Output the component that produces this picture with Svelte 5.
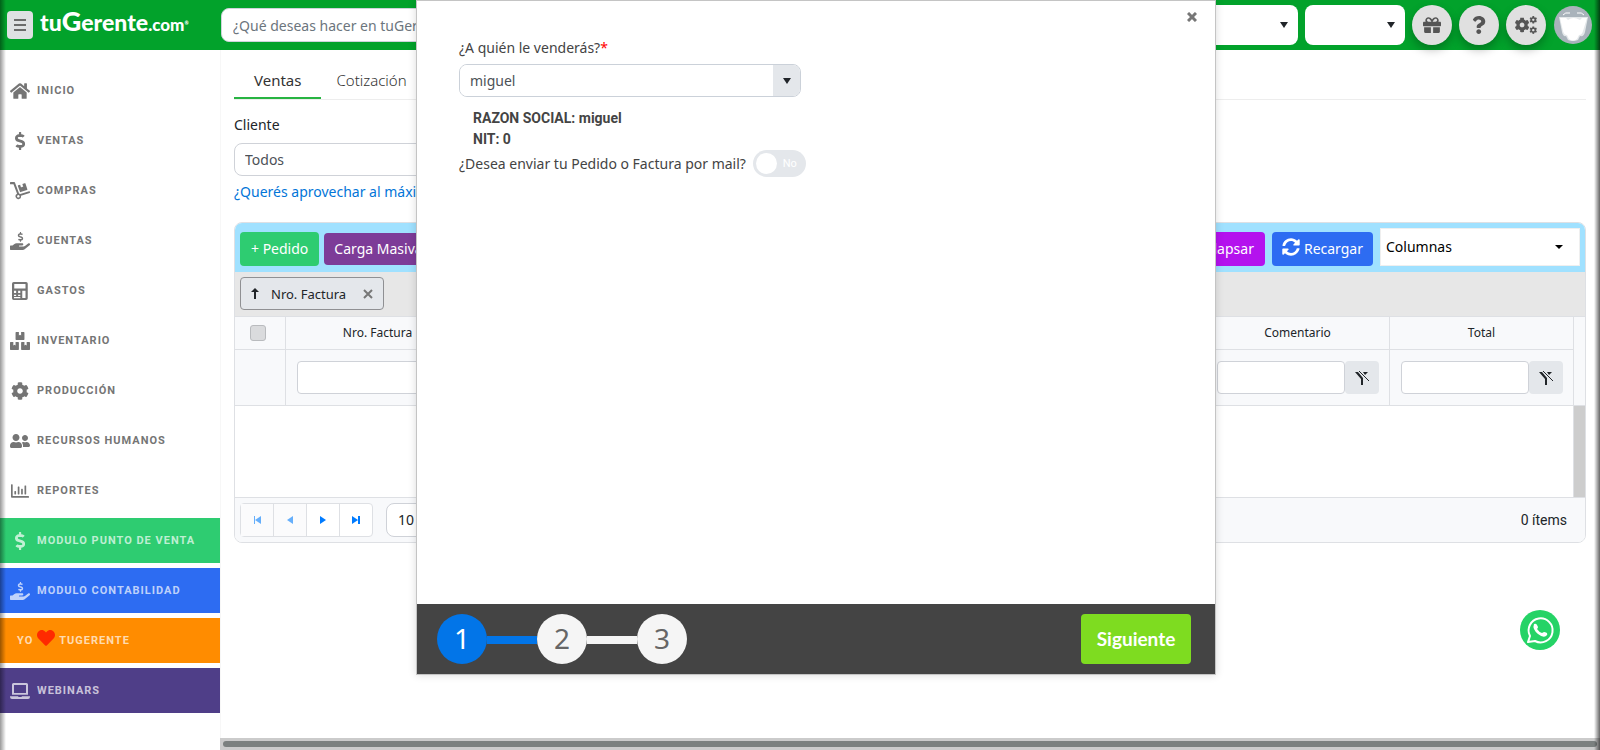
<script>
  const gear =
    'M487.4 315.7l-42.6-24.6c4.3-23.2 4.3-47 0-70.2l42.6-24.6c4.9-2.8 7.1-8.6 5.5-14-11.1-35.6-30-67.8-54.7-94.6-3.8-4.1-10-5.1-14.8-2.3L380.8 110c-17.9-15.4-38.5-27.3-60.8-35.1V25.8c0-5.6-3.9-10.5-9.4-11.7-36.7-8.2-74.3-7.8-109.2 0-5.5 1.2-9.4 6.1-9.4 11.7V75c-22.2 7.9-42.8 19.8-60.8 35.1L88.7 85.5c-4.9-2.8-11-1.9-14.8 2.3-24.7 26.7-43.6 58.9-54.7 94.6-1.7 5.4.6 11.2 5.5 14L67.3 221c-4.3 23.2-4.3 47 0 70.2l-42.6 24.6c-4.9 2.8-7.1 8.6-5.5 14 11.1 35.6 30 67.8 54.7 94.6 3.8 4.1 10 5.1 14.8 2.3l42.6-24.6c17.9 15.4 38.5 27.3 60.8 35.1v49.2c0 5.6 3.9 10.5 9.4 11.7 36.7 8.2 74.3 7.8 109.2 0 5.5-1.2 9.4-6.1 9.4-11.7v-49.2c22.2-7.9 42.8-19.8 60.8-35.1l42.6 24.6c4.9 2.8 11 1.9 14.8-2.3 24.7-26.7 43.6-58.9 54.7-94.6 1.5-5.5-.7-11.3-5.6-14.1zM256 336c-44.1 0-80-35.9-80-80s35.9-80 80-80 80 35.9 80 80-35.9 80-80 80z';
  const dollar =
    'M209.2 233.4l-108-31.6C88.7 198.2 80 186.5 80 173.5c0-16.3 13.2-29.5 29.5-29.5h66.3c12.2 0 24.2 3.7 34.2 10.5 6.1 4.1 14.3 3.1 19.5-2l34.8-34c7.1-6.9 6.1-18.4-1.8-24.5C238 74.8 207.4 64.1 176 64V16c0-8.8-7.2-16-16-16h-32c-8.8 0-16 7.2-16 16v48h-2.5C45.8 64-5.4 118.7.5 183.6c4.2 46.1 39.4 83.6 83.8 96.6l102.5 30c12.5 3.7 21.2 15.3 21.2 28.3 0 16.3-13.2 29.5-29.5 29.5h-66.3C100 368 88 364.3 78 357.5c-6.1-4.1-14.3-3.1-19.5 2l-34.8 34c-7.1 6.9-6.1 18.4 1.8 24.5 24.5 19.2 55.1 29.9 86.5 30v48c0 8.8 7.2 16 16 16h32c8.8 0 16-7.2 16-16v-48.2c46.6-.9 90.3-28.6 105.7-72.7 21.5-61.6-14.6-124.8-72.5-141.7z';
  const hand =
    'M565.3 328.1c-11.8-10.7-30.2-10-42.6 0L430.3 402c-11.3 9.1-25.4 14-40 14H272c-8.8 0-16-7.2-16-16s7.2-16 16-16h78.3c15.9 0 30.7-10.9 33.3-26.6 3.3-20-12.1-37.4-31.6-37.4H192c-27 0-53.1 9.3-74.1 26.3L71.4 384H16c-8.8 0-16 7.2-16 16v96c0 8.8 7.2 16 16 16h356.8c14.5 0 28.6-4.9 40-14L564 377c15.2-12.1 16.4-35.3 1.3-48.9z';
  const heart =
    'M462.3 62.6C407.5 15.9 326 24.3 275.7 76.2L256 96.5l-19.7-20.3C186.1 24.3 104.5 15.9 49.7 62.6c-62.8 53.6-66.1 149.8-9.9 207.9l193.5 199.8c12.5 12.9 32.8 12.9 45.3 0l193.5-199.8c56.3-58.1 53-154.3-9.8-207.9z';

  const icons = {
    home: { w: 576, parts: [{ d: 'M280.37 148.26L96 300.11V464a16 16 0 0 0 16 16l112.06-.29a16 16 0 0 0 15.92-16V368a16 16 0 0 1 16-16h64a16 16 0 0 1 16 16v95.64a16 16 0 0 0 16 16.05L464 480a16 16 0 0 0 16-16V300L295.67 148.26a12.19 12.19 0 0 0-15.3 0zM571.6 251.47L488 182.56V44.05a12 12 0 0 0-12-12h-56a12 12 0 0 0-12 12v72.61L318.47 43a48 48 0 0 0-61 0L4.34 251.47a12 12 0 0 0-1.6 16.9l25.5 31A12 12 0 0 0 45.15 301l235.22-193.74a12.19 12.19 0 0 1 15.3 0L530.9 301a12 12 0 0 0 16.9-1.6l25.5-31a12 12 0 0 0-1.7-16.93z' }] },
    dollar: { w: 288, parts: [{ d: dollar }] },
    dolly: { w: 576, parts: [
      { d: 'M0 16Q0 0 16 0H122Q139 0 145 16L262 326Q280 330 294 344L552 262Q568 258 572 273L576 290Q580 305 566 310L316 392A80 80 0 1 1 204 338L100 64H16Q0 64 0 48ZM240 372a36 36 0 1 0 .1 0z' },
      { d: 'M226 112Q222 98 236 93L292 74L318 158L346 136L382 138L356 52L424 30Q440 26 445 40L500 208Q504 222 490 227L306 288Q291 292 286 278Z' }
    ] },
    handDollar: { w: 576, parts: [{ d: hand }, { d: dollar, t: 'translate(224 0) scale(.54)' }] },
    calculator: { w: 448, parts: [{ d: 'M48 0H400Q448 0 448 48V464Q448 512 400 512H48Q0 512 0 464V48Q0 0 48 0ZM64 56V184H384V56ZM56 248V310H118V248ZM174 248V310H236V248ZM292 248V456H384V248ZM56 366V400H118V366ZM174 366V400H236V366ZM56 430V460H236V430Z' }] },
    boxes: { w: 576, parts: [{ d: 'M560 288h-80v96l-32-21.3-32 21.3v-96h-80c-8.8 0-16 7.2-16 16v192c0 8.8 7.2 16 16 16h224c8.8 0 16-7.2 16-16V304c0-8.8-7.2-16-16-16zm-384-64h224c8.8 0 16-7.2 16-16V16c0-8.8-7.2-16-16-16h-80v96l-32-21.3L256 96V0h-80c-8.8 0-16 7.2-16 16v192c0 8.8 7.2 16 16 16zm64 64h-80v96l-32-21.3L96 384v-96H16c-8.8 0-16 7.2-16 16v192c0 8.8 7.2 16 16 16h224c8.8 0 16-7.2 16-16V304c0-8.8-7.2-16-16-16z' }] },
    cog: { w: 512, parts: [{ d: gear }] },
    users: { w: 640, parts: [{ d: 'M192 256c61.9 0 112-50.1 112-112S253.9 32 192 32 80 82.1 80 144s50.1 112 112 112zm76.8 32h-8.3c-20.8 10-43.9 16-68.5 16s-47.6-6-68.5-16h-8.3C51.6 288 0 339.6 0 403.2V432c0 26.5 21.5 48 48 48h288c26.5 0 48-21.5 48-48v-28.8c0-63.6-51.6-115.2-115.2-115.2zM480 256c53 0 96-43 96-96s-43-96-96-96-96 43-96 96 43 96 96 96zm48 32h-3.8c-13.9 4.8-28.6 8-44.2 8s-30.3-3.2-44.2-8H432c-20.4 0-39.2 5.9-55.7 15.4 24.4 26.3 39.7 61.2 39.7 99.8v38.4c0 2.2-.5 4.3-.6 6.4H592c26.5 0 48-21.5 48-48 0-61.9-50.1-112-112-112z' }] },
    chart: { w: 512, parts: [{ d: 'M396.8 352h22.4c6.4 0 12.8-6.4 12.8-12.8V108.8c0-6.4-6.4-12.8-12.8-12.8h-22.4c-6.4 0-12.8 6.4-12.8 12.8v230.4c0 6.4 6.4 12.8 12.8 12.8zm-192 0h22.4c6.4 0 12.8-6.4 12.8-12.8V140.8c0-6.4-6.4-12.8-12.8-12.8h-22.4c-6.4 0-12.8 6.4-12.8 12.8v198.4c0 6.4 6.4 12.8 12.8 12.8zm96 0h22.4c6.4 0 12.8-6.4 12.8-12.8V204.8c0-6.4-6.4-12.8-12.8-12.8h-22.4c-6.4 0-12.8 6.4-12.8 12.8v134.4c0 6.4 6.4 12.8 12.8 12.8zM496 400H48V80c0-8.84-7.16-16-16-16H16C7.16 64 0 71.16 0 80v336c0 17.67 14.33 32 32 32h464c8.84 0 16-7.16 16-16v-16c0-8.84-7.16-16-16-16zm-387.2-48h22.4c6.4 0 12.8-6.4 12.8-12.8v-70.4c0-6.4-6.4-12.8-12.8-12.8h-22.4c-6.4 0-12.8 6.4-12.8 12.8v70.4c0 6.4 6.4 12.8 12.8 12.8z' }] },
    laptop: { w: 640, parts: [{ d: 'M112 0H528Q576 0 576 48V376H64V48Q64 0 112 0ZM128 64V320H512V64ZM0 424H256Q260 448 284 448H356Q380 448 384 424H640V440Q640 512 576 512H64Q0 512 0 440Z' }] },
    gift: { w: 512, parts: [{ d: 'M32 448c0 17.7 14.3 32 32 32h160V320H32v128zm256 32h160c17.7 0 32-14.3 32-32V320H288v160zm192-320h-42.1c6.2-12.1 10.1-25.5 10.1-40 0-48.5-39.5-88-88-88-41.6 0-68.5 21.3-103 68.3-34.5-47-61.4-68.3-103-68.3-48.5 0-88 39.5-88 88 0 14.5 3.8 27.9 10.1 40H32c-17.7 0-32 14.3-32 32v80c0 8.8 7.2 16 16 16h480c8.8 0 16-7.2 16-16v-80c0-17.7-14.3-32-32-32zm-326.1 0c-22.1 0-40-17.9-40-40s17.9-40 40-40c19.9 0 34.6 3.3 86.1 80h-86.1zm206.1 0h-86.1c51.4-76.5 65.7-80 86.1-80 22.1 0 40 17.9 40 40s-17.9 40-40 40z' }] },
    question: { w: 384, parts: [{ d: 'M202.021 0C122.202 0 70.503 32.703 29.914 91.026c-7.363 10.58-5.093 25.086 5.178 32.874l43.138 32.709c10.373 7.865 25.132 6.026 33.253-4.148 25.049-31.381 43.63-49.449 82.757-49.449 30.764 0 68.816 19.799 68.816 49.631 0 22.552-18.617 34.134-48.993 51.164-35.423 19.86-82.299 44.576-82.299 106.405V320c0 13.255 10.745 24 24 24h72.471c13.255 0 24-10.745 24-24v-5.773c0-42.86 125.268-44.645 125.268-160.627C377.504 66.256 286.902 0 202.021 0zM192 373.459c-38.196 0-69.271 31.075-69.271 69.271 0 38.195 31.075 69.27 69.271 69.27s69.271-31.075 69.271-69.271-31.075-69.27-69.271-69.27z' }] },
    cogs: { w: 640, parts: [
      { d: gear, t: 'translate(-14 40) scale(.84)' },
      { d: gear, t: 'translate(410 0) scale(.43)' },
      { d: gear, t: 'translate(410 292) scale(.43)' }
    ] },
    sync: { w: 512, parts: [{ d: 'M370.72 133.28C339.458 104.008 298.888 87.962 255.848 88c-77.458.068-144.328 53.178-162.791 126.85-1.344 5.363-6.122 9.15-11.651 9.15H24.103c-7.498 0-13.194-6.807-11.807-14.176C33.933 94.924 134.813 8 256 8c66.448 0 126.791 26.136 171.315 68.685L463.03 40.97C478.149 25.851 504 36.559 504 57.941V192c0 13.255-10.745 24-24 24H345.941c-21.382 0-32.09-25.851-16.971-40.971l41.75-41.749zM32 296h134.059c21.382 0 32.09 25.851 16.971 40.971l-41.75 41.75c31.262 29.273 71.835 45.319 114.876 45.28 77.418-.07 144.315-53.144 162.787-126.849 1.344-5.363 6.122-9.15 11.651-9.15h57.304c7.498 0 13.194 6.807 11.807 14.176C478.067 417.076 377.187 504 256 504c-66.448 0-126.791-26.136-171.315-68.685L48.97 471.03C33.851 486.149 8 475.441 8 454.059V320c0-13.255 10.745-24 24-24z' }] }
  };

  const menu = [
    { icon: 'home', text: 'INICIO' },
    { icon: 'dollar', text: 'VENTAS' },
    { icon: 'dolly', text: 'COMPRAS' },
    { icon: 'handDollar', text: 'CUENTAS' },
    { icon: 'calculator', text: 'GASTOS' },
    { icon: 'boxes', text: 'INVENTARIO' },
    { icon: 'cog', text: 'PRODUCCIÓN' },
    { icon: 'users', text: 'RECURSOS HUMANOS' },
    { icon: 'chart', text: 'REPORTES' },
    { icon: 'dollar', text: 'MODULO PUNTO DE VENTA', tone: 'green' },
    { icon: 'handDollar', text: 'MODULO CONTABILIDAD', tone: 'blue' },
    { heart: true, tone: 'orange' },
    { icon: 'laptop', text: 'WEBINARS', tone: 'purple' }
  ];

  const columns = ['Nro. Factura', '', '', '', '', 'Comentario', 'Total'];
  const pagerButtons = [
    { label: 'Primera página', d: 'M1 0h1v8H1zM8 0v8L2 4z', off: true },
    { label: 'Página anterior', d: 'M7 0v8L1 4z', off: true },
    { label: 'Página siguiente', d: 'M1 0v8l6-4z' },
    { label: 'Última página', d: 'M0 0v8l6-4zM6 0h2v8H6z' }
  ];
</script>

{#snippet icon(name)}
  <svg class="icon" viewBox="0 0 {icons[name].w} 512" aria-hidden="true">
    {#each icons[name].parts as part}
      <path d={part.d} transform={part.t} fill-rule="evenodd" />
    {/each}
  </svg>
{/snippet}

{#snippet caret()}
  <svg class="caret" viewBox="0 0 8 6" aria-hidden="true"><path d="M0 0h8L4 6z" /></svg>
{/snippet}

<div class="page">
  <header>
    <button class="burger" aria-label="Menú">
      <svg viewBox="0 0 12 12" aria-hidden="true"><path d="M0 0h12v2H0zM0 5h12v2H0zM0 10h12v2H0z" /></svg>
    </button>
    <a class="logo" href="#inicio"><span>tu</span><span class="big">G</span><span>erente</span><span class="com">.com</span><span class="tm">®</span></a>
    <input class="search" type="text" aria-label="Buscar" placeholder="¿Qué deseas hacer en tuGerente?" />
    <div class="tools">
      <div class="pick wide"><select aria-label="Empresa"><option></option></select>{@render caret()}</div>
      <div class="pick"><select aria-label="Sucursal"><option></option></select>{@render caret()}</div>
      <button class="round" aria-label="Regalos">{@render icon('gift')}</button>
      <button class="round" aria-label="Ayuda">{@render icon('question')}</button>
      <button class="round" aria-label="Configuración">{@render icon('cogs')}</button>
      <button class="avatar" aria-label="Perfil">
        <svg viewBox="0 0 38 38" aria-hidden="true">
          <circle cx="19" cy="19" r="19" fill="#a9b3bb" />
          <path d="M5 11H34L31 26Q30 31 26 30L24 34Q19 36 14 34L12 30Q9 31 8 26Z" fill="#e4e8ea" />
          <path d="M6 12H12L14 14Q19 10 26 14L28 12H33L29 25Q28 29 25 29L23 33Q19 36 15 33L13 29Q10 29 9 25Z" fill="#fff" />
          <path d="M9 9Q11 6 16 7M23 7Q28 6 30 9" fill="none" stroke="#fff" stroke-width="1" />
        </svg>
      </button>
    </div>
  </header>

  <div class="shell">
    <nav>
      {#each menu as item}
        <a href="#menu" class={item.tone ?? ''} class:solid={item.tone}>
          {#if item.heart}
            <span class="love">YO <svg class="heart" viewBox="0 0 512 512" aria-hidden="true"><path d={heart} /></svg> TUGERENTE</span>
          {:else}
            <span class="slot">{@render icon(item.icon)}</span>{item.text}
          {/if}
        </a>
      {/each}
    </nav>

    <main>
      <div class="content">
        <div class="tabs">
          <button class="tab on">Ventas</button>
          <button class="tab">Cotización</button>
        </div>

        <div class="filter">
          <label for="cliente">Cliente</label>
          <select id="cliente"><option>Todos</option></select>
          <a href="#ayuda">¿Querés aprovechar al máximo tus ventas?</a>
        </div>

        <section class="grid">
          <div class="toolbar">
            <button class="btn green">+ Pedido</button>
            <button class="btn violet">Carga Masiva</button>
            <span class="grow"></span>
            <button class="btn magenta">Colapsar</button>
            <button class="btn azure">{@render icon('sync')}Recargar</button>
            <div class="cols">
              <select aria-label="Columnas"><option>Columnas</option></select>
              <svg viewBox="0 0 8 4" aria-hidden="true"><path d="M0 0h8L4 4z" /></svg>
            </div>
          </div>
          <div class="groups">
            <div class="chip">
              <svg class="up" viewBox="0 0 8 11" aria-hidden="true"><path d="M4 0l4 4H5v7H3V4H0z" /></svg>
              Nro. Factura
              <button aria-label="Quitar grupo">
                <svg viewBox="0 0 10 10" aria-hidden="true"><path d="M1 1l8 8M9 1l-8 8" /></svg>
              </button>
            </div>
          </div>
          <div class="sheet">
            <table>
              <thead>
                <tr class="names">
                  <th class="tick"><input type="checkbox" aria-label="Seleccionar todo" /></th>
                  {#each columns as name}<th>{name}</th>{/each}
                </tr>
                <tr class="filters">
                  <td class="tick"></td>
                  {#each columns as name}
                    <td>
                      <div class="search-cell">
                        <input type="text" aria-label="Filtrar {name}" />
                        <button aria-label="Quitar filtro {name}">
                          <svg viewBox="0 0 14 14" aria-hidden="true">
                            <path d="M0 1h3l5 6v7H6V8zM8 1h5l-3 3z" />
                            <path class="slash" d="M4 0l10 10" />
                          </svg>
                        </button>
                      </div>
                    </td>
                  {/each}
                </tr>
              </thead>
              <tbody><tr><td colspan="8"></td></tr></tbody>
            </table>
            <div class="gutter"><span></span></div>
          </div>
          <div class="pager">
            <div class="steps">
              {#each pagerButtons as b}
                <button aria-label={b.label} class:off={b.off}>
                  <svg viewBox="0 0 8 8" aria-hidden="true"><path d={b.d} /></svg>
                </button>
              {/each}
            </div>
            <select aria-label="Ítems por página"><option>10</option></select>
            <span class="total">0 ítems</span>
          </div>
        </section>
      </div>
      <div class="hbar"><span></span></div>
    </main>
  </div>

  <button class="whats" aria-label="WhatsApp">
    <svg viewBox="0 0 40 40" aria-hidden="true">
      <path d="M8 32l2-6a12 12 0 1 1 5 5z" fill="none" stroke="#fff" stroke-width="2" stroke-linejoin="round" />
      <path d="M14 14q2-1 3 1l1 2q0 1-1 2q2 3 5 4l2-1q1 0 3 1q1 2-1 3q-3 2-8-2q-6-5-4-10z" fill="#fff" />
    </svg>
  </button>

  <div class="modal" role="dialog" aria-label="Nuevo pedido">
    <button class="close" aria-label="Cerrar">
      <svg viewBox="0 0 10 10" aria-hidden="true"><path d="M1 1l8 8M9 1l-8 8" /></svg>
    </button>
    <div class="form">
      <label for="comprador">¿A quién le venderás?<span class="required">*</span></label>
      <div class="combo">
        <select id="comprador"><option>miguel</option></select>
        <span>{@render caret()}</span>
      </div>
      <div class="who">
        <div>RAZON SOCIAL: miguel</div>
        <div>NIT: 0</div>
      </div>
      <label class="mail">
        ¿Desea enviar tu Pedido o Factura por mail?
        <input type="checkbox" role="switch" />
        <span class="switch">No</span>
      </label>
    </div>
    <div class="foot">
      <ol>
        <li class="now">1</li>
        <li>2</li>
        <li>3</li>
      </ol>
      <button>Siguiente</button>
    </div>
  </div>
  <div class="edges"></div>
</div>

<style>
  :global(body) {
    overflow: hidden;
  }
  .page,
  .page * {
    box-sizing: border-box;
  }
  .page {
    position: relative;
    display: flex;
    flex-direction: column;
    min-height: 100vh;
    font: 14px/20px 'Noto Sans', 'Open Sans', sans-serif;
    color: #212529;
    background: #fff;
  }
  button,
  input,
  select {
    font: inherit;
    color: inherit;
    margin: 0;
    appearance: none;
    border-radius: 0;
  }
  button {
    display: flex;
    align-items: center;
    justify-content: center;
    padding: 0;
    border: 0;
    background: none;
    white-space: nowrap;
  }
  a {
    text-decoration: none;
  }
  svg {
    display: block;
    fill: currentColor;
    flex: none;
  }
  .caret {
    width: 8px;
    height: 6px;
    color: #212529;
  }

  header {
    display: flex;
    align-items: center;
    height: 50px;
    padding: 0 8px 0 7px;
    background: #02a22b;
  }
  .burger {
    width: 26px;
    height: 28px;
    border-radius: 4px;
    background: #dfe1e3;
    color: #6b6b6b;
  }
  .burger svg {
    width: 12px;
    height: 12px;
  }
  .logo {
    display: flex;
    align-items: baseline;
    width: 188px;
    padding: 0 0 4px 7px;
    font: 900 23px/28px Lato, sans-serif;
    color: #fff;
  }
  .logo .big {
    font-size: 27px;
  }
  .logo .com {
    font-size: 17px;
  }
  .logo .tm {
    align-self: center;
    font-size: 5px;
  }
  .search {
    width: 420px;
    height: 34px;
    padding: 0 11px;
    border: 1px solid #ced4da;
    border-radius: 8px;
    background: #fff;
  }
  .search::placeholder {
    color: #6c757d;
    opacity: 1;
  }
  .tools {
    display: flex;
    align-items: center;
    gap: 7px;
    margin-left: auto;
  }
  .pick {
    position: relative;
    width: 100px;
    height: 40px;
  }
  .pick.wide {
    width: 200px;
  }
  .pick select {
    width: 100%;
    height: 100%;
    border: 0;
    border-radius: 8px;
    background: #fff;
  }
  .pick .caret {
    position: absolute;
    right: 10px;
    top: 17px;
  }
  .round {
    width: 40px;
    height: 40px;
    border-radius: 50%;
    background: #e0e0e0;
    color: #555;
    box-shadow: 0 5px 10px rgba(0, 0, 0, 0.25);
  }
  .round .icon {
    height: 18px;
  }
  .avatar {
    margin-left: 1px;
  }
  .avatar svg {
    width: 38px;
    height: 38px;
  }

  .shell {
    display: flex;
    flex: 1;
  }
  nav {
    display: flex;
    flex-direction: column;
    gap: 5px;
    flex: none;
    width: 220px;
    padding-top: 18px;
  }
  nav a {
    display: flex;
    align-items: center;
    height: 45px;
    padding: 0 10px;
    font: 700 11px/20px Roboto, 'Noto Sans', sans-serif;
    letter-spacing: 1px;
    white-space: nowrap;
    color: #757575;
  }
  .slot {
    display: flex;
    flex: none;
    justify-content: center;
    width: 20px;
    margin-right: 7px;
  }
  .slot .icon {
    height: 18px;
    max-width: 20px;
  }
  nav .solid {
    color: rgba(255, 255, 255, 0.7);
  }
  nav .green {
    background: #2ecc71;
  }
  nav .blue {
    background: #2d6cf2;
  }
  nav .orange {
    background: #ff8c00;
  }
  nav .purple {
    background: #4f3e88;
  }
  .love {
    display: flex;
    align-items: center;
    gap: 4px;
    padding-left: 7px;
  }
  .heart {
    width: 18px;
    height: 18px;
    margin-bottom: 5px;
    color: #ff2a00;
  }

  main {
    display: flex;
    flex-direction: column;
    flex: 1;
    min-width: 0;
  }
  .content {
    flex: 1;
    padding: 10px 14px 0 13px;
    border-left: 1px solid #f7f7f7;
  }
  .tabs {
    display: flex;
    height: 40px;
    border-bottom: 1px solid #ededed;
  }
  .tab {
    height: 39px;
    padding: 2px 15px 0;
    font-size: 15px;
    font-weight: 300;
    color: #333;
    border-bottom: 2px solid transparent;
  }
  .tab.on {
    padding: 2px 20px 0;
    font-weight: 400;
    border-color: #28b442;
  }
  .filter {
    display: flex;
    flex-direction: column;
    align-items: flex-start;
    padding-top: 15px;
  }
  .filter select {
    width: 340px;
    height: 33px;
    margin: 8px 0 6px;
    padding: 0 10px;
    border: 1px solid #cfd2d8;
    border-radius: 8px;
    background: #fff;
    color: #4c5157;
  }
  .filter a {
    color: #0275d8;
  }

  .grid {
    margin-top: 20px;
    border: 1px solid #dee0e4;
    border-radius: 8px;
    overflow: hidden;
  }
  .toolbar {
    display: flex;
    align-items: flex-end;
    gap: 5px;
    height: 49px;
    padding: 5px;
    padding-bottom: 6px;
    background: #a0e1ff;
  }
  .grow {
    flex: 1;
  }
  .btn {
    height: 34px;
    padding: 0 11px;
    border-radius: 4px;
    color: #fff;
  }
  .btn.green {
    background: #2ecc71;
  }
  .btn.violet {
    height: 32px;
    margin-bottom: 1px;
    padding: 0 10px;
    background: #7d3c98;
  }
  .btn.magenta {
    margin-right: 2px;
    background: #b412ee;
  }
  .btn.azure {
    gap: 4px;
    margin-right: 2px;
    padding: 0 10px;
    background: #2d6cf2;
  }
  .btn .icon {
    height: 18px;
    margin-bottom: 4px;
  }
  .cols {
    position: relative;
    width: 200px;
    height: 38px;
  }
  .cols select {
    width: 100%;
    height: 100%;
    padding: 0 5px;
    border: 1px solid #efefef;
    background: #fff;
    color: #000;
  }
  .cols svg {
    position: absolute;
    right: 17px;
    top: 17px;
    width: 8px;
    height: 4px;
    color: #000;
  }
  .groups {
    display: flex;
    height: 44px;
    padding: 5px;
    background: #e7e7e7;
  }
  .chip {
    display: flex;
    align-items: center;
    gap: 12px;
    height: 33px;
    padding: 0 10px;
    border: 1px solid #8f9093;
    border-radius: 4px;
    background: #e4e7eb;
    font-size: 13px;
  }
  .chip .up {
    width: 8px;
    height: 11px;
  }
  .chip button {
    margin-left: 5px;
    color: #777;
  }
  .chip button svg {
    width: 10px;
    height: 10px;
    stroke: currentColor;
    stroke-width: 2;
  }
  .sheet {
    display: flex;
  }
  table {
    flex: 1;
    width: 100%;
    table-layout: fixed;
    border-collapse: separate;
    border-spacing: 0;
  }
  th,
  td {
    padding: 0;
    border-top: 1px solid #dee0e4;
    border-left: 1px solid #dee0e4;
  }
  th:first-child,
  td:first-child {
    border-left: 0;
  }
  .names {
    height: 33px;
    background: #f8f9fb;
  }
  th {
    font-size: 12px;
    line-height: 16px;
    font-weight: 400;
  }
  .tick {
    width: 50px;
    padding-left: 15px;
  }
  .tick input {
    display: block;
    width: 16px;
    height: 16px;
    border: 1px solid #b9bbbe;
    border-radius: 3px;
    background: #dadbdd;
  }
  .filters {
    height: 56px;
    background: #f8f9fb;
  }
  .search-cell {
    display: flex;
    padding: 0 10px 0 11px;
  }
  .search-cell input {
    flex: 1;
    min-width: 0;
    height: 33px;
    border: 1px solid #cfd2d8;
    border-radius: 4px;
    background: #fff;
  }
  .search-cell button {
    width: 34px;
    height: 33px;
    border-radius: 4px;
    background: #e4e7eb;
  }
  .search-cell svg {
    width: 14px;
    height: 14px;
  }
  .slash {
    fill: none;
    stroke: currentColor;
    stroke-width: 1;
  }
  tbody td {
    height: 92px;
  }
  .gutter {
    display: flex;
    flex-direction: column;
    width: 12px;
    padding-top: 88px;
    border-top: 1px solid #dee0e4;
    border-left: 1px solid #dee0e4;
    background: #f8f9fb;
  }
  .gutter span {
    flex: 1;
    border-top: 1px solid #dee0e4;
    background: #cdcdcd;
  }
  .pager {
    display: flex;
    align-items: center;
    gap: 13px;
    height: 45px;
    padding: 0 18px 0 5px;
    border-top: 1px solid #dee0e4;
    background: #f8f9fb;
  }
  .steps {
    display: flex;
    border: 1px solid #dee0e4;
    border-radius: 4px;
    background: #fff;
  }
  .steps button {
    width: 33px;
    height: 32px;
    color: #007bff;
  }
  .steps button:first-child {
    width: 32px;
  }
  .steps button + button {
    border-left: 1px solid #dee0e4;
  }
  .steps .off {
    color: #66affb;
    background: #fbfbfc;
  }
  .steps svg {
    width: 8px;
    height: 8px;
  }
  .pager select {
    width: 80px;
    height: 34px;
    padding: 0 11px;
    border: 1px solid #cfd2d8;
    border-radius: 8px;
    background: #fff;
  }
  .total {
    margin-left: auto;
    font-family: Roboto, sans-serif;
  }
  .hbar {
    height: 12px;
    padding: 3px;
    background: #cbcbcb;
  }
  .hbar span {
    display: block;
    height: 6px;
    border-radius: 3px;
    background: #7b807f;
  }

  .whats {
    position: absolute;
    right: 40px;
    bottom: 100px;
    width: 40px;
    height: 40px;
    border-radius: 50%;
    background: #25d366;
  }
  .whats svg {
    width: 40px;
    height: 40px;
  }

  .modal {
    position: absolute;
    top: 0;
    left: 26%;
    display: flex;
    flex-direction: column;
    width: 50%;
    min-height: 90vh;
    border: 1px solid #c4c4c4;
    background: #fff;
    color: #444;
    box-shadow: 0 0 8px rgba(0, 0, 0, 0.15);
  }
  .close {
    position: absolute;
    top: 11px;
    right: 18px;
    color: #777;
  }
  .close svg {
    width: 10px;
    height: 10px;
    stroke: currentColor;
    stroke-width: 3;
  }
  .form {
    flex: 1;
    padding: 37px 42px;
  }
  .form > label {
    display: flex;
  }
  .required {
    color: #f00;
  }
  .combo {
    display: flex;
    width: 342px;
    height: 33px;
    margin: 6px 0 11px;
    border: 1px solid #cbd1d9;
    border-radius: 8px;
    overflow: hidden;
  }
  .combo select {
    flex: 1;
    padding: 0 10px;
    border: 0;
    background: #fff;
    color: #4c5157;
  }
  .combo span {
    display: flex;
    align-items: center;
    justify-content: center;
    width: 27px;
    background: #e4e7eb;
  }
  .who {
    padding-left: 14px;
    font: 700 14px/21px Roboto, 'Noto Sans', sans-serif;
  }
  .form .mail {
    align-items: center;
    gap: 7px;
  }
  .mail input {
    position: absolute;
    opacity: 0;
  }
  .switch {
    display: flex;
    align-items: center;
    justify-content: space-between;
    width: 53px;
    height: 27px;
    padding: 0 9px 0 3px;
    border-radius: 14px;
    background: #e4e7eb;
    font: 11px/16px Roboto, sans-serif;
    color: #fff;
  }
  .switch::before {
    content: '';
    width: 21px;
    height: 21px;
    border-radius: 50%;
    background: #fff;
  }
  .foot {
    display: flex;
    align-items: center;
    justify-content: space-between;
    padding: 10px 24px 10px 20px;
    background: #444;
  }
  .foot ol {
    display: flex;
    align-items: center;
    margin: 0;
    padding: 0;
    list-style: none;
  }
  .foot li {
    position: relative;
    width: 50px;
    height: 50px;
    margin-right: 50px;
    border-radius: 50%;
    background: #f5f5f5;
    font-size: 28px;
    line-height: 48px;
    text-align: center;
    color: #666;
  }
  .foot li:not(:last-child)::after {
    content: '';
    position: absolute;
    left: 50px;
    top: 22px;
    width: 50px;
    height: 8px;
    background: #f5f5f5;
  }
  .foot .now,
  .foot .now:not(:last-child)::after {
    background: #0275e8;
    color: #fff;
  }
  .foot button {
    width: 110px;
    height: 50px;
    border-radius: 4px;
    background: #7edc20;
    font: 700 19px/24px Lato, sans-serif;
    color: #fff;
  }
  .edges {
    position: absolute;
    inset: 0;
    pointer-events: none;
    background:
      linear-gradient(90deg, rgba(0, 0, 0, 0.4), transparent) left / 6px 100% no-repeat,
      linear-gradient(270deg, rgba(0, 0, 0, 0.6), transparent) right / 6px 100% no-repeat;
  }
</style>
